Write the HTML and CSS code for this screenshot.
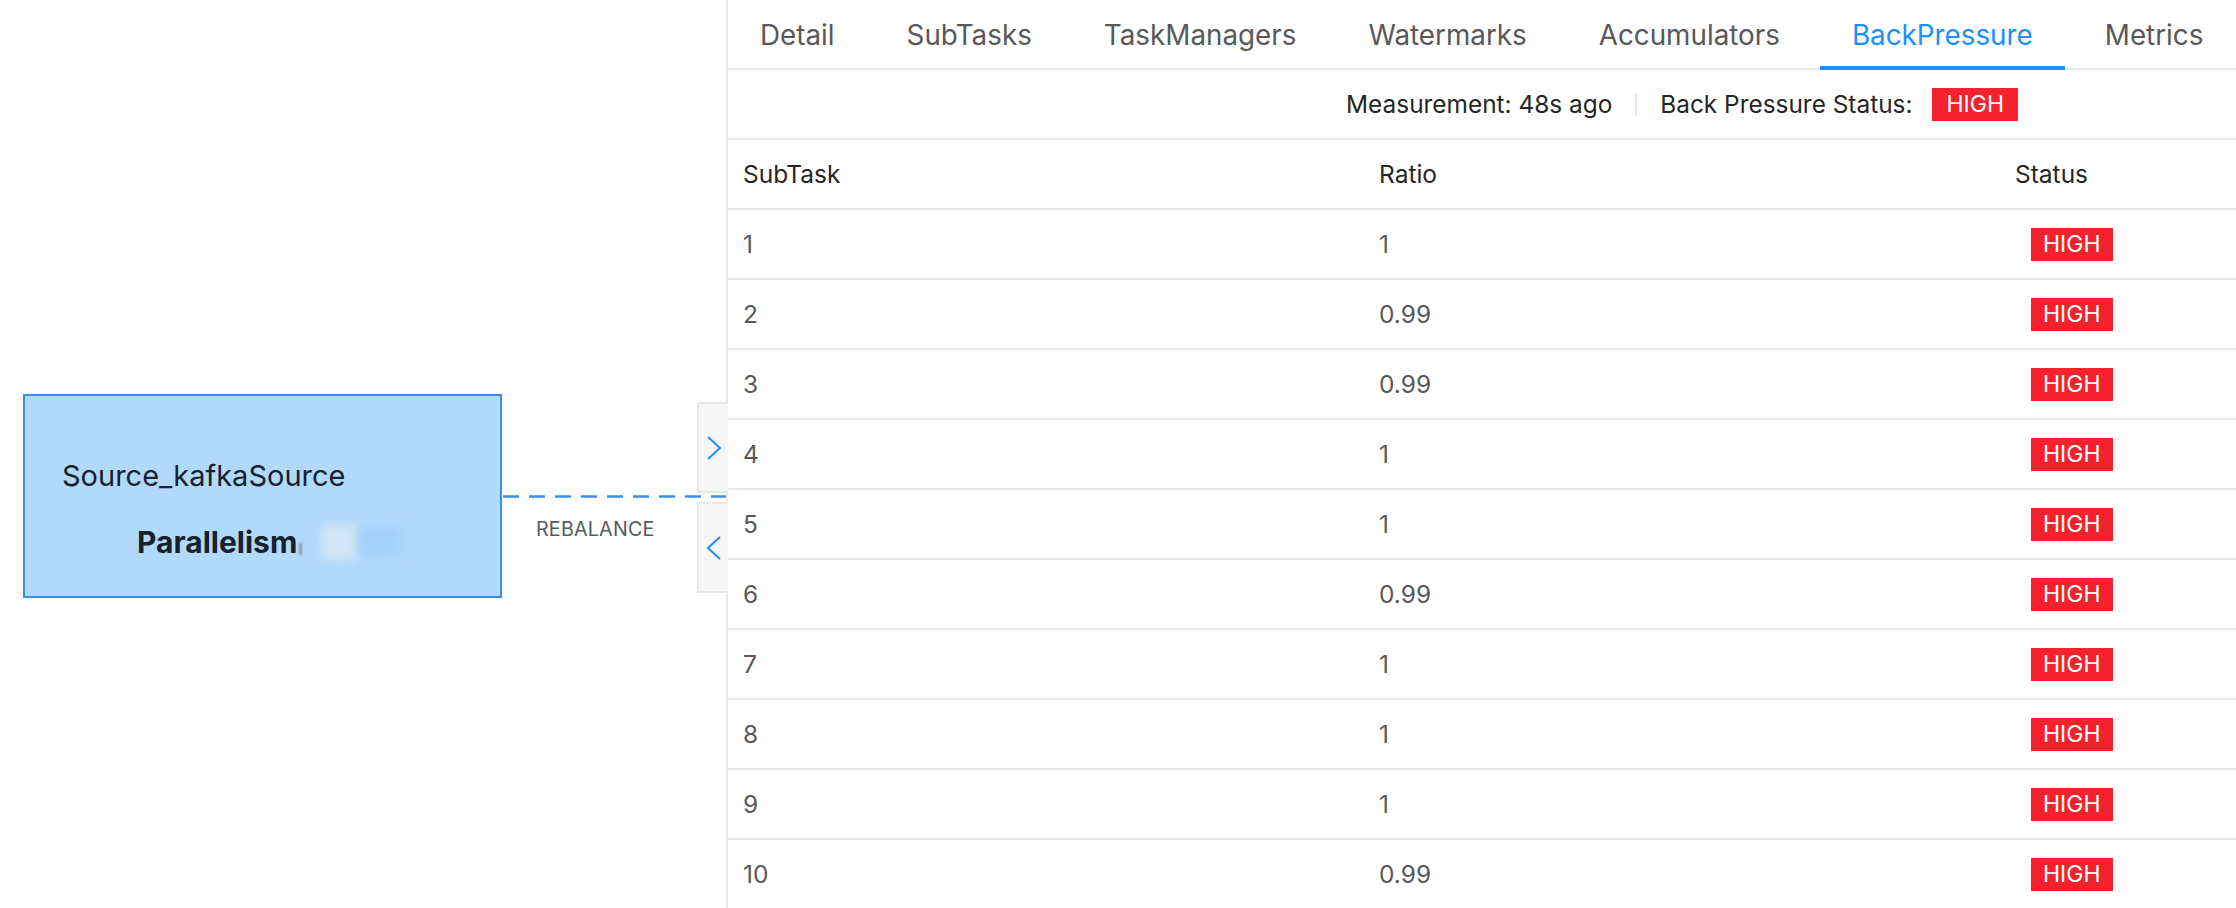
FILE: index.html
```html
<!DOCTYPE html>
<html lang="en">
<head>
<meta charset="utf-8">
<title>BackPressure</title>
<link rel="stylesheet" href="styles.css">
</head>
<body>
<div class="page">
  <div class="graph">
    <svg class="edge" width="726" height="908" viewBox="0 0 726 908">
      <line x1="503" y1="496.5" x2="726" y2="496.5" stroke="#3a8ee8" stroke-width="2.5" stroke-dasharray="16 10"/>
    </svg>
    <div class="node">
      <div class="node-name">Source_kafkaSource</div>
      <div class="node-par"><b>Parallelism</b><span class="redact"><i class="r1"></i><i class="r2"></i><i class="r3"></i></span></div>
    </div>
    <div class="edge-label">REBALANCE</div>
    <div class="toggle toggle-top">
      <svg width="18" height="26" viewBox="0 0 18 26"><path d="M3 2 L15 13 L3 24" fill="none" stroke="#1890ff" stroke-width="2"/></svg>
    </div>
    <div class="toggle toggle-bottom">
      <svg width="18" height="26" viewBox="0 0 18 26"><path d="M15 2 L3 13 L15 24" fill="none" stroke="#1890ff" stroke-width="2"/></svg>
    </div>
  </div>
  <div class="panel">
    <div class="tabs">
      <div class="tab">Detail</div>
      <div class="tab">SubTasks</div>
      <div class="tab">TaskManagers</div>
      <div class="tab">Watermarks</div>
      <div class="tab">Accumulators</div>
      <div class="tab active">BackPressure</div>
      <div class="tab">Metrics</div>
    </div>
    <div class="measure">
      <span>Measurement: 48s ago</span>
      <span class="divider"></span>
      <span>Back Pressure Status:</span>
      <span class="tag tag-head">HIGH</span>
    </div>
    <div class="table">
      <div class="row head">
        <div class="cell">SubTask</div>
        <div class="cell">Ratio</div>
        <div class="cell">Status</div>
      </div>
      <div class="row"><div class="cell">1</div><div class="cell">1</div><div class="cell"><span class="tag">HIGH</span></div></div>
      <div class="row"><div class="cell">2</div><div class="cell">0.99</div><div class="cell"><span class="tag">HIGH</span></div></div>
      <div class="row"><div class="cell">3</div><div class="cell">0.99</div><div class="cell"><span class="tag">HIGH</span></div></div>
      <div class="row"><div class="cell">4</div><div class="cell">1</div><div class="cell"><span class="tag">HIGH</span></div></div>
      <div class="row"><div class="cell">5</div><div class="cell">1</div><div class="cell"><span class="tag">HIGH</span></div></div>
      <div class="row"><div class="cell">6</div><div class="cell">0.99</div><div class="cell"><span class="tag">HIGH</span></div></div>
      <div class="row"><div class="cell">7</div><div class="cell">1</div><div class="cell"><span class="tag">HIGH</span></div></div>
      <div class="row"><div class="cell">8</div><div class="cell">1</div><div class="cell"><span class="tag">HIGH</span></div></div>
      <div class="row"><div class="cell">9</div><div class="cell">1</div><div class="cell"><span class="tag">HIGH</span></div></div>
      <div class="row"><div class="cell">10</div><div class="cell">0.99</div><div class="cell"><span class="tag">HIGH</span></div></div>
    </div>
  </div>
</div>
</body>
</html>
```
FILE: styles.css
```css
html, body {
  margin: 0;
  padding: 0;
  background: #ffffff;
}
body {
  font-family: Inter, "Liberation Sans", Arial, sans-serif;
  width: 2236px;
  height: 908px;
  overflow: hidden;
}
.page {
  display: flex;
  width: 2236px;
  height: 908px;
}
.graph {
  position: relative;
  width: 726px;
  height: 908px;
  flex-shrink: 0;
}
.edge {
  position: absolute;
  left: 0;
  top: 0;
}
.node {
  position: absolute;
  left: 23px;
  top: 394px;
  width: 479px;
  height: 204px;
  box-sizing: border-box;
  border: 2px solid #3a8fec;
  background: #b1d9fc;
  color: #18222d;
  line-height: 40px;
  padding-top: 60px;
}
.node-name {
  padding-left: 37px;
  font-size: 29px;
}
.node-par {
  margin-top: 26px;
  padding-left: 112px;
  display: flex;
  align-items: center;
  font-size: 30px;
}
.node-par b {
  font-weight: 700;
}
.redact {
  display: inline-flex;
  align-items: center;
  margin-left: 2px;
  height: 40px;
}
.redact i {
  display: inline-block;
  filter: blur(4px);
}
.redact .r1 {
  width: 3px;
  height: 12px;
  background: #8a9aa8;
  margin-top: 14px;
  filter: blur(1px);
}
.redact .r2 {
  width: 36px;
  height: 34px;
  background: #d3e6f5;
  margin-left: 20px;
}
.redact .r3 {
  width: 42px;
  height: 30px;
  background: #a5d1fa;
}
.edge-label {
  position: absolute;
  left: 536px;
  top: 517px;
  font-size: 19.7px;
  line-height: 24px;
  color: #555b61;
  letter-spacing: 0.2px;
}
.toggle {
  position: absolute;
  left: 697px;
  width: 31px;
  height: 91px;
  box-sizing: border-box;
  background: #f7f7f7;
  border: 2px solid #e8e8e8;
  border-right: none;
  display: flex;
  align-items: center;
  justify-content: center;
  z-index: 2;
}
.toggle-top {
  top: 402px;
}
.toggle-bottom {
  top: 502px;
}
.panel {
  flex: 1;
  border-left: 2px solid #e8e8e8;
  height: 908px;
  overflow: hidden;
  min-width: 0;
}
.tabs {
  display: flex;
  height: 68px;
  border-bottom: 2px solid #e8e8e8;
  white-space: nowrap;
}
.tab {
  position: relative;
  padding: 3px 32px 0;
  margin-right: 8px;
  line-height: 65px;
  font-size: 27.8px;
  color: #595959;
  flex-shrink: 0;
}
.tab.active {
  color: #1890ff;
}
.tab.active::after {
  content: "";
  position: absolute;
  left: 0;
  right: 0;
  bottom: -2px;
  height: 4px;
  background: #1890ff;
}
.measure {
  display: flex;
  align-items: center;
  justify-content: flex-end;
  height: 68px;
  border-bottom: 2px solid #e8e8e8;
  padding-right: 218px;
  font-size: 24.4px;
  color: #262626;
}
.divider {
  display: inline-block;
  width: 2px;
  height: 23px;
  background: #e8e8e8;
  margin: 0 23px;
}
.tag {
  display: inline-block;
  background: #f5222d;
  color: #ffffff;
  font-size: 23px;
  line-height: 33px;
  height: 33px;
  padding: 0 12px;
}
.tag-head {
  margin-left: 20px;
  padding: 0 14px;
}
.table {
  display: flex;
  flex-direction: column;
}
.row {
  display: grid;
  grid-template-columns: 636px 636px 1fr;
  height: 68px;
  border-bottom: 2px solid #e8e8e8;
  align-items: center;
  font-size: 24.5px;
  color: #595959;
}
.row.head {
  color: #262626;
}
.cell {
  padding: 0 15px;
  white-space: nowrap;
}
.cell .tag {
  margin-left: 16px;
}
```
